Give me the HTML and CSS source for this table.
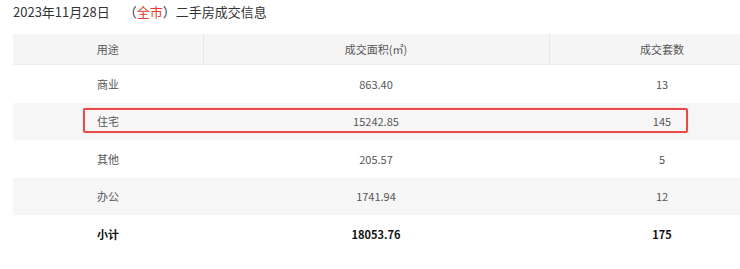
FILE: index.html
```html
<!DOCTYPE html>
<html lang="zh-CN">
<head>
<meta charset="utf-8">
<link rel="stylesheet" href="styles.css">
</head>
<body>
<div class="page">
  <div class="title">2023年11月28日<span class="gap"></span>（<span class="red">全市</span>）二手房成交信息</div>
  <table class="tbl">
    <colgroup><col class="c1"><col class="c2"><col class="c3"></colgroup>
    <thead>
      <tr><th>用途</th><th>成交面积(㎡)</th><th>成交套数</th></tr>
    </thead>
    <tbody>
      <tr><td>商业</td><td>863.40</td><td>13</td></tr>
      <tr class="alt"><td class="mark-cell">住宅<span class="mark"></span></td><td>15242.85</td><td>145</td></tr>
      <tr><td>其他</td><td>205.57</td><td>5</td></tr>
      <tr class="alt"><td>办公</td><td>1741.94</td><td>12</td></tr>
      <tr class="total"><td>小计</td><td>18053.76</td><td>175</td></tr>
    </tbody>
  </table>
</div>
</body>
</html>
```
FILE: styles.css
```css
html, body {
  margin: 0;
  padding: 0;
  background: #fff;
  overflow: hidden;
}
.page {
  width: 762px;
  padding: 3px 0 0 13px;
  font-family: "Microsoft YaHei", "Noto Sans CJK SC", sans-serif;
}
.title {
  font-size: 13px;
  line-height: 18px;
  color: #333;
  height: 18px;
}
.gap {
  display: inline-block;
  width: 14px;
}
.red {
  color: #e8382f;
}
.tbl {
  margin-top: 13px;
  width: 762px;
  border-collapse: collapse;
  table-layout: fixed;
  font-size: 11px;
  color: #555;
}
.c1 { width: 190px; }
.c2 { width: 346px; }
.c3 { width: 226px; }
.tbl th {
  background: #f5f5f5;
  font-weight: normal;
  height: 30px;
  padding: 0;
  border-right: 1px solid #e6e6e6;
  border-bottom: 1px solid #ececec;
  text-align: center;
}
.tbl td {
  height: 37.5px;
  padding: 0;
  text-align: center;
}
.tbl tr.alt td {
  background: #f6f6f6;
}
.tbl tr.total td {
  font-weight: bold;
  color: #111;
}
.mark-cell {
  position: relative;
}
.mark {
  position: absolute;
  left: 70px;
  top: 5px;
  width: 601px;
  height: 21px;
  border: 2.5px solid #e84a4a;
  border-radius: 2px;
  box-shadow: 0 0 1px rgba(232, 74, 74, 0.6);
  pointer-events: none;
}
```
